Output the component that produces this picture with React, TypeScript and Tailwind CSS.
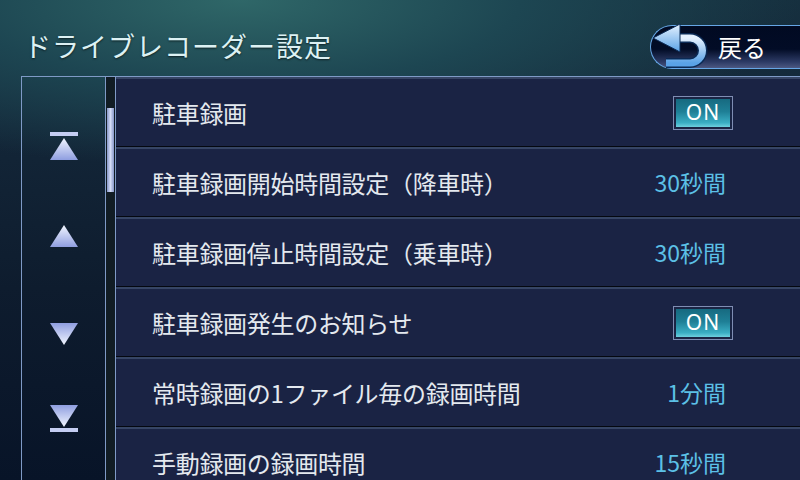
import React from "react";

const FONT = { fontFamily: '"Noto Sans CJK JP", "Noto Sans", sans-serif' };

function Tri({ dir, bar }: { dir: "up" | "down"; bar?: boolean }) {
  const id = `g-${dir}-${bar ? "b" : "n"}`;
  return (
    <svg width="28" height="30" viewBox="0 0 28 30">
      <defs>
        <linearGradient id={id} x1="0" y1={dir === "up" ? "0" : "1"} x2="0" y2={dir === "up" ? "1" : "0"}>
          <stop offset="0" stopColor="#f2f6ff" />
          <stop offset="1" stopColor="#8f9ee0" />
        </linearGradient>
      </defs>
      {dir === "up" ? (
        <>
          {bar && <rect x="0" y="0" width="28" height="4" fill="#c4cdf2" />}
          <polygon points="14,6 28,28 0,28" fill={`url(#${id})`} />
        </>
      ) : (
        <>
          <polygon points="0,2 28,2 14,24" fill={`url(#${id})`} />
          {bar && <rect x="0" y="25" width="28" height="4" fill="#c4cdf2" />}
        </>
      )}
    </svg>
  );
}

function OnButton() {
  return (
    <div className="w-[60px] h-[34px] border border-[#7f8db3] p-[2px] bg-[#1a2444]">
      <div className="w-full h-full flex items-center justify-center bg-[linear-gradient(to_bottom,#176a80_0%,#1e7f96_45%,#3aaec4_85%,#6fd0df_100%)]">
        <span className="text-[21px] leading-none text-white tracking-[1px]" style={{ fontFamily: '"Noto Sans", sans-serif' }}>
          ON
        </span>
      </div>
    </div>
  );
}

const rows: { label: string; value: string; on?: boolean }[] = [
  { label: "駐車録画", value: "ON", on: true },
  { label: "駐車録画開始時間設定（降車時）", value: "30秒間" },
  { label: "駐車録画停止時間設定（乗車時）", value: "30秒間" },
  { label: "駐車録画発生のお知らせ", value: "ON", on: true },
  { label: "常時録画の1ファイル毎の録画時間", value: "1分間" },
  { label: "手動録画の録画時間", value: "15秒間" },
];

export default function App() {
  return (
    <div
      className="w-[800px] h-[480px] overflow-hidden relative bg-[radial-gradient(ellipse_70%_35%_at_30%_0%,#2f6768_0%,#1d4652_50%,transparent_100%),linear-gradient(to_bottom,#16303f_0%,#14283a_20%,#0e1c2e_60%,#081428_100%)]"
      style={FONT}
    >
      {/* header */}
      <div className="h-[76px] flex items-start justify-between pl-[24px]">
        <div className="mt-[28px] text-[27px] leading-[36px] text-[#dcf1f3] tracking-[1px] [text-shadow:0_1px_2px_rgba(0,0,0,0.6)]">
          ドライブレコーダー設定
        </div>
        <div className="relative mt-[25px] w-[150px] h-[44px]">
          <div className="absolute inset-0 rounded-l-full border border-r-0 border-[#66a6e6] bg-[linear-gradient(to_bottom,#010a22_0%,#020c26_55%,#2c3a64_85%,#4c5882_100%)] flex items-center pl-[67px]">
            <span className="text-[24px] text-white leading-none">戻る</span>
          </div>
          <svg className="absolute left-[0px] top-[-7px]" width="62" height="54" viewBox="0 0 62 54">
            <defs>
              <linearGradient id="arr" x1="0" y1="0" x2="0" y2="1">
                <stop offset="0" stopColor="#e6f2ff" />
                <stop offset="1" stopColor="#5aa2e6" />
              </linearGradient>
            </defs>
            <path d="M27 20 H40 A12.5 12.5 0 0 1 40 45 H16" fill="none" stroke="#0b2a55" strokeWidth="10" />
            <path d="M27 20 H40 A12.5 12.5 0 0 1 40 45 H16" fill="none" stroke="url(#arr)" strokeWidth="7" />
            <polygon points="3,20 30,6 30,34" fill="url(#arr)" stroke="#0b2a55" strokeWidth="1" />
          </svg>
        </div>
      </div>

      {/* body */}
      <div className="ml-[21px] flex border-t border-l border-[#7f9ac6] h-[404px]">
        <div className="w-[84px] border-r border-[#7f9ac6] flex flex-col items-center pt-[55px]">
          <Tri dir="up" bar />
          <div className="h-[57px]" />
          <Tri dir="up" />
          <div className="h-[72px]" />
          <Tri dir="down" />
          <div className="h-[52px]" />
          <Tri dir="down" bar />
        </div>
        <div className="w-[10px] border-r border-[#7f9ac6] bg-[#111c24] pt-[31px] px-[1px]">
          <div className="w-[7px] h-[84px] bg-[linear-gradient(to_right,#8696c8_0%,#d4dcf6_50%,#8696c8_100%)]" />
        </div>
        <div className="flex-1 flex flex-col">
          {rows.map((r, i) => (
            <div
              key={i}
              className="h-[70px] shrink-0 border-t-2 border-t-[#364565] border-b border-b-[#040810] bg-[#1a2344] flex items-center justify-between pl-[36px] pr-[67px]"
            >
              <span className="text-[24px] text-[#e4e9ef] leading-none tracking-[-0.3px]">{r.label}</span>
              {r.on ? (
                <OnButton />
              ) : (
                <span className="text-[23px] text-[#5cc0e6] leading-none pr-[7px]">{r.value}</span>
              )}
            </div>
          ))}
        </div>
      </div>
    </div>
  );
}
